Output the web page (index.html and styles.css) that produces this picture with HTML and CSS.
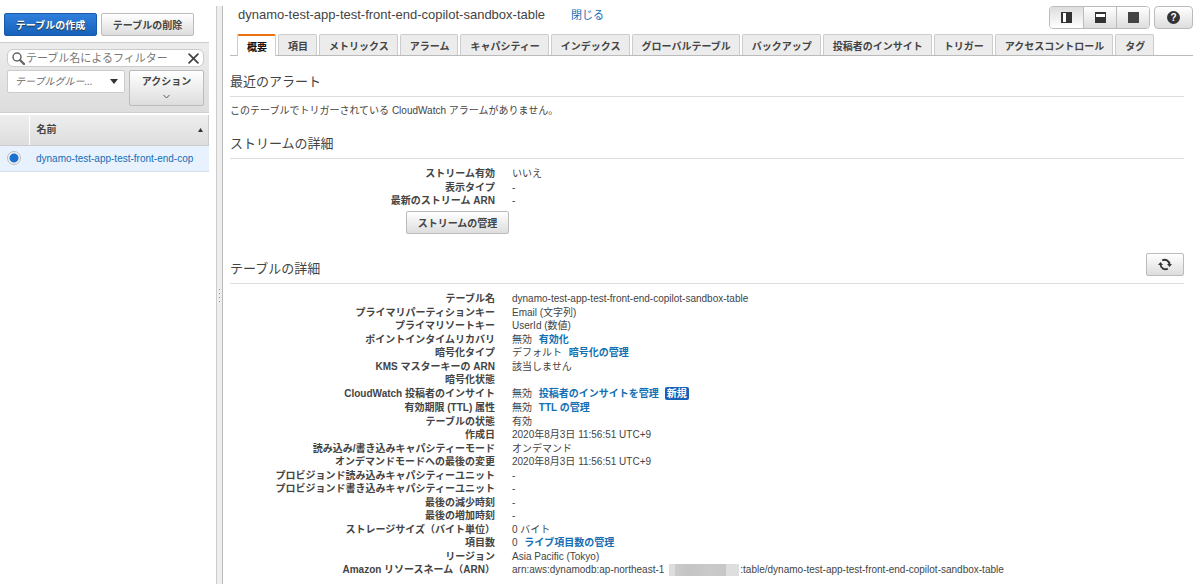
FILE: index.html
```html
<!DOCTYPE html>
<html lang="ja">
<head>
    <meta charset="UTF-8">
    <meta name="viewport" content="width=device-width, initial-scale=1.0">
    <title>DynamoDB</title>
    <link rel="stylesheet" href="styles.css">
</head>
<body>
    <div class="console">
        <aside class="sidebar">
            <div class="table-buttons">
                <button class="btn btn-primary">テーブルの作成</button>
                <button class="btn">テーブルの削除</button>
            </div>
            <div class="filters">
                <div class="search">
                    <svg class="search-icon" viewBox="0 0 13 13"><circle cx="5" cy="5" r="4" fill="none" stroke="#666" stroke-width="1.5"/><path d="M8 8l4 4" stroke="#666" stroke-width="2.4" stroke-linecap="round"/></svg>
                    <input type="text" aria-label="フィルター" placeholder="テーブル名によるフィルター">
                    <button class="clear-button" aria-label="クリア"><svg viewBox="0 0 10 10"><path d="M1 1l8 8M9 1l-8 8" stroke="#444" stroke-width="1.6" stroke-linecap="round"/></svg></button>
                </div>
                <div class="filter-row">
                    <div class="group-wrap">
                        <select class="group-select" aria-label="テーブルグループ">
                            <option>テーブルグルー...</option>
                        </select>
                        <svg class="caret" viewBox="0 0 8 5"><path d="M0 0h8L4 5z" fill="#333"/></svg>
                    </div>
                    <button class="btn action-button">アクション<svg viewBox="0 0 7 5"><path d="M.5 1l3 3 3-3" fill="none" stroke="#555"/></svg></button>
                </div>
            </div>
            <table class="table-list">
                <thead>
                    <tr>
                        <th class="pick"></th>
                        <th><div class="name-head">名前<svg viewBox="0 0 5 4"><path d="M0 4h5L2.5 0z" fill="#333"/></svg></div></th>
                    </tr>
                </thead>
                <tbody>
                    <tr>
                        <td class="pick"><input type="radio" id="table-1" name="table" aria-label="選択" checked></td>
                        <td><label for="table-1">dynamo-test-app-test-front-end-cop</label></td>
                    </tr>
                </tbody>
            </table>
        </aside>

        <div class="splitter"><span></span><span></span><span></span><span></span></div>

        <main class="main">
            <header class="title-bar">
                <h1>dynamo-test-app-test-front-end-copilot-sandbox-table</h1>
                <a class="close-link" href="#">閉じる</a>
                <div class="layout-buttons">
                    <button class="active" aria-label="左右"><svg viewBox="0 0 11 11"><path d="M0 0h11v11H0z" fill="#333"/><path d="M2 1h3v9H2z" fill="#fff"/></svg></button>
                    <button aria-label="上下"><svg viewBox="0 0 11 11"><path d="M0 0h11v11H0z" fill="#333"/><path d="M1 2h9v3H1z" fill="#fff"/></svg></button>
                    <button aria-label="全画面"><svg viewBox="0 0 11 11"><path d="M0 0h11v11H0z" fill="#444"/></svg></button>
                </div>
                <button class="btn help-button" aria-label="ヘルプ"><span>?</span></button>
            </header>

            <nav class="tabs">
                <button class="tab current">概要</button>
                <button class="tab">項目</button>
                <button class="tab">メトリックス</button>
                <button class="tab">アラーム</button>
                <button class="tab">キャパシティー</button>
                <button class="tab">インデックス</button>
                <button class="tab">グローバルテーブル</button>
                <button class="tab">バックアップ</button>
                <button class="tab">投稿者のインサイト</button>
                <button class="tab">トリガー</button>
                <button class="tab">アクセスコントロール</button>
                <button class="tab">タグ</button>
            </nav>

            <section class="alerts">
                <div class="section-head"><h2>最近のアラート</h2></div>
                <p>このテーブルでトリガーされている CloudWatch アラームがありません。</p>
            </section>

            <section class="stream">
                <div class="section-head"><h2>ストリームの詳細</h2></div>
                <dl class="details">
                    <div><dt>ストリーム有効</dt><dd>いいえ</dd></div>
                    <div><dt>表示タイプ</dt><dd>-</dd></div>
                    <div><dt>最新のストリーム ARN</dt><dd>-</dd></div>
                </dl>
                <button class="btn stream-button">ストリームの管理</button>
            </section>

            <section class="table-info">
                <div class="section-head">
                    <h2>テーブルの詳細</h2>
                    <button class="btn refresh-button" aria-label="更新"><svg viewBox="0 0 14 13"><path d="M4.2 2.4A4.9 4.9 0 0 1 11.5 6.5M9.8 10.6A4.9 4.9 0 0 1 2.5 6.5" fill="none" stroke="#333" stroke-width="1.8"/><path d="M9 6h5l-2.5 3zM0 7h5L2.5 4z" fill="#333"/></svg></button>
                </div>
                <dl class="details">
                    <div><dt>テーブル名</dt><dd>dynamo-test-app-test-front-end-copilot-sandbox-table</dd></div>
                    <div><dt>プライマリパーティションキー</dt><dd>Email (文字列)</dd></div>
                    <div><dt>プライマリソートキー</dt><dd>UserId (数値)</dd></div>
                    <div><dt>ポイントインタイムリカバリ</dt><dd>無効 <a href="#">有効化</a></dd></div>
                    <div><dt>暗号化タイプ</dt><dd>デフォルト <a href="#">暗号化の管理</a></dd></div>
                    <div><dt>KMS マスターキーの ARN</dt><dd>該当しません</dd></div>
                    <div><dt>暗号化状態</dt><dd></dd></div>
                    <div class="with-badge"><dt>CloudWatch 投稿者のインサイト</dt><dd>無効 <a href="#">投稿者のインサイトを管理</a><span class="badge">新規</span></dd></div>
                    <div><dt>有効期限 (TTL) 属性</dt><dd>無効 <a href="#">TTL の管理</a></dd></div>
                    <div><dt>テーブルの状態</dt><dd>有効</dd></div>
                    <div><dt>作成日</dt><dd>2020年8月3日 11:56:51 UTC+9</dd></div>
                    <div><dt>読み込み/書き込みキャパシティーモード</dt><dd>オンデマンド</dd></div>
                    <div><dt>オンデマンドモードへの最後の変更</dt><dd>2020年8月3日 11:56:51 UTC+9</dd></div>
                    <div><dt>プロビジョンド読み込みキャパシティーユニット</dt><dd>-</dd></div>
                    <div><dt>プロビジョンド書き込みキャパシティーユニット</dt><dd>-</dd></div>
                    <div><dt>最後の減少時刻</dt><dd>-</dd></div>
                    <div><dt>最後の増加時刻</dt><dd>-</dd></div>
                    <div><dt>ストレージサイズ（バイト単位）</dt><dd>0 バイト</dd></div>
                    <div><dt>項目数</dt><dd>0 <a href="#">ライブ項目数の管理</a></dd></div>
                    <div><dt>リージョン</dt><dd>Asia Pacific (Tokyo)</dd></div>
                    <div><dt>Amazon リソースネーム（ARN）</dt><dd>arn:aws:dynamodb:ap-northeast-1<span class="masked"></span>:table/dynamo-test-app-test-front-end-copilot-sandbox-table</dd></div>
                </dl>
            </section>
        </main>
    </div>
</body>
</html>
```
FILE: styles.css
```css
* {
    box-sizing: border-box;
}

body {
    margin: 0;
    font-family: "Liberation Sans", "Noto Sans CJK JP", sans-serif;
    font-size: 10px;
    line-height: 13px;
    color: #444;
    background-color: white;
}

button, input, select {
    font-family: inherit;
    font-size: 10px;
    color: #444;
    margin: 0;
}

button {
    cursor: pointer;
}

svg {
    display: block;
}

a {
    color: #146eb4;
    text-decoration: none;
}

.console {
    display: flex;
    min-height: 100vh;
}

.btn {
    height: 23px;
    padding: 0 10px;
    border: 1px solid #bbb;
    border-radius: 2px;
    background: linear-gradient(#fff, #ddd);
    font-weight: bold;
    white-space: nowrap;
}

.btn-primary {
    border-color: #1a5ba8;
    background: linear-gradient(#2f7fdc, #1662bb);
    color: white;
    text-shadow: 0 1px 1px #333;
}

/* Sidebar */
.sidebar {
    flex: 0 0 209px;
}

.table-buttons {
    display: flex;
    gap: 4px;
    padding: 13px 4px 6px;
}

.table-buttons .btn {
    width: 93px;
    padding: 0;
}

.filters {
    padding: 6px 5px 6px 7px;
    border-top: 1px solid #ccc;
    background: linear-gradient(#ececec, #ddd);
    border-bottom: 1px solid #d0d0d0;
}

.search {
    display: flex;
    align-items: center;
    height: 18px;
    padding: 0 4px;
    border: 1px solid #ccc;
    border-radius: 6px;
    background-color: white;
}

.search-icon {
    width: 13px;
    height: 13px;
}

.search input {
    flex: 1;
    min-width: 0;
    height: 16px;
    padding: 0 1px;
    border: none;
    background: none;
    font-size: 11px;
}

.search input::placeholder {
    color: #777;
}

.clear-button {
    padding: 0;
    border: none;
    background: none;
}

.clear-button svg {
    width: 11px;
    height: 11px;
}

.filter-row {
    display: flex;
    align-items: flex-start;
    gap: 4px;
    margin-top: 3px;
}

.group-wrap {
    position: relative;
    flex: 1;
}

.group-select {
    width: 100%;
    height: 23px;
    padding: 0 7px;
    border: 1px solid #ccc;
    border-radius: 2px;
    background-color: white;
    appearance: none;
    font-style: italic;
    color: #666;
}

.caret {
    position: absolute;
    top: 9px;
    right: 7px;
    width: 8px;
    height: 5px;
    pointer-events: none;
}

.action-button {
    display: flex;
    flex-direction: column;
    align-items: center;
    gap: 6px;
    width: 75px;
    height: 36px;
    padding-top: 2px;
}

.action-button svg {
    width: 7px;
    height: 5px;
}

.table-list {
    width: 100%;
    margin-top: 2px;
    border-collapse: collapse;
    table-layout: fixed;
}

.table-list th {
    height: 30px;
    padding: 0 5px 0 7px;
    border-right: 1px solid #ccc;
    border-bottom: 1px solid #ccc;
    background: linear-gradient(#eee, #ddd);
    text-align: left;
}

.table-list td {
    height: 26px;
    padding: 0 0 0 7px;
    border-bottom: 1px solid #d5e0ec;
    background-color: #e8f2ff;
    color: #146eb4;
    white-space: nowrap;
}

.table-list .pick {
    width: 29px;
}

.table-list th.pick {
    border-right-color: white;
}

.name-head {
    display: flex;
    align-items: center;
    justify-content: space-between;
}

.name-head svg {
    width: 5px;
    height: 4px;
}

.table-list input {
    display: block;
    width: 14px;
    height: 14px;
    border: 1px solid #bbb;
    border-radius: 50%;
    background: radial-gradient(circle, #1c70d0 4px, #f4f4f4 5px);
    appearance: none;
}

/* Drag handle between the panels */
.splitter {
    display: flex;
    flex: 0 0 7px;
    flex-direction: column;
    align-items: center;
    justify-content: center;
    gap: 3px;
    margin: 6px 7px 0;
    border-left: 1px solid #ccc;
    border-right: 1px solid #bbb;
    background-color: #eee;
}

.splitter span {
    width: 1px;
    height: 1px;
    background-color: #999;
}

/* Main panel */
.main {
    flex: 1;
    min-width: 0;
    padding-right: 7px;
}

.title-bar {
    display: flex;
    align-items: flex-start;
    height: 34px;
    padding: 6px 0 0 8px;
}

h1, h2 {
    margin: 0;
    font-size: 13px;
    font-weight: normal;
    line-height: 18px;
}

.close-link {
    margin-left: 26px;
    font-size: 11px;
    line-height: 18px;
}

.layout-buttons {
    display: flex;
    margin-left: auto;
    border: 1px solid #bbb;
    border-radius: 4px;
    overflow: hidden;
}

.layout-buttons button {
    display: flex;
    align-items: center;
    justify-content: center;
    width: 33px;
    height: 21px;
    padding: 0;
    border: none;
    background: linear-gradient(#fff, #ddd);
}

.layout-buttons button + button {
    border-left: 1px solid #bbb;
}

.layout-buttons .active {
    background: linear-gradient(#ddd, #fff);
}

.layout-buttons svg {
    width: 11px;
    height: 11px;
}

.help-button {
    display: flex;
    align-items: center;
    justify-content: center;
    width: 39px;
    margin-left: 4px;
    border-radius: 4px;
}

.help-button span {
    width: 13px;
    height: 13px;
    border-radius: 50%;
    background-color: #333;
    color: white;
    line-height: 13px;
}

.tabs {
    display: flex;
    gap: 2px;
    padding-left: 7px;
    border-bottom: 1px solid #bbb;
}

.tab {
    height: 21px;
    padding: 0 8px 0 9px;
    border: 1px solid #ccc;
    border-bottom: none;
    border-radius: 2px 2px 0 0;
    background-color: #ececec;
    font-weight: bold;
    white-space: nowrap;
}

.tab.current {
    height: 22px;
    margin-bottom: -1px;
    border-top: 2px solid #ec7211;
    background-color: white;
    color: #111;
}

section {
    padding-right: 9px;
}

.section-head {
    display: flex;
    align-items: flex-end;
    justify-content: space-between;
    padding-bottom: 5px;
    border-bottom: 1px solid #ddd;
}

.alerts {
    padding-top: 17px;
}

.alerts p {
    margin: 7px 0 0;
}

.stream {
    padding-top: 18px;
}

.table-info {
    padding-top: 19px;
}

.table-info .section-head {
    padding-bottom: 7px;
}

.table-info h2 {
    line-height: 14px;
}

.details {
    margin: 8px 0 0;
}

.details div {
    display: grid;
    grid-template-columns: 265px 1fr;
    column-gap: 17px;
}

.details div:nth-child(even) {
    padding-top: 1px;
}

.details .with-badge {
    padding-bottom: 1px;
}

.details dt {
    font-weight: bold;
    text-align: right;
}

.details dd {
    margin: 0;
    white-space: nowrap;
}

.details a {
    margin-left: 4px;
    font-weight: bold;
}

.badge {
    display: inline-block;
    margin-left: 6px;
    padding: 0 2px;
    border-radius: 2px;
    background-color: #1560b8;
    color: white;
    font-weight: bold;
}

.masked {
    display: inline-block;
    width: 70px;
    height: 12px;
    margin: 0 1px 0 5px;
    background: linear-gradient(90deg, #ddd 6px, #ccc 6px, #c4c4c4 18px, #cacaca 42px, #c6c6c6 57px, #dedede 57px);
    vertical-align: bottom;
}

.stream-button {
    display: block;
    width: 103px;
    margin: 4px 0 0 176px;
}

.refresh-button {
    width: 38px;
}

.refresh-button svg {
    width: 14px;
    height: 13px;
    margin: 0 auto;
}
```
